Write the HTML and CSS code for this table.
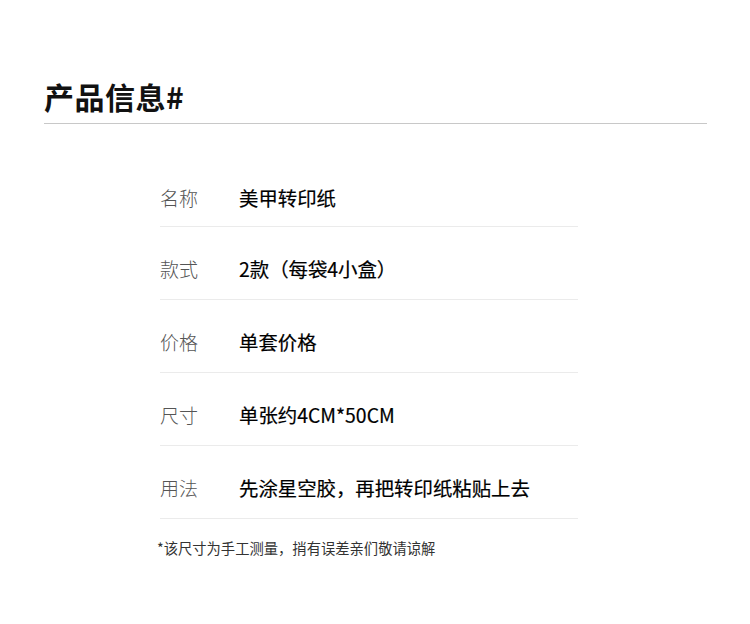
FILE: index.html
```html
<!DOCTYPE html>
<html lang="zh">
<head>
<meta charset="utf-8">
<title>产品信息</title>
<link rel="stylesheet" href="styles.css">
</head>
<body>
<div class="page">
  <header class="head">
    <h1 class="title">产品信息#</h1>
  </header>
  <section class="info">
    <div class="row"><span class="label">名称</span><span class="value">美甲转印纸</span></div>
    <div class="row"><span class="label">款式</span><span class="value">2款（每袋4小盒）</span></div>
    <div class="row"><span class="label">价格</span><span class="value">单套价格</span></div>
    <div class="row"><span class="label">尺寸</span><span class="value">单张约4CM*50CM</span></div>
    <div class="row"><span class="label">用法</span><span class="value">先涂星空胶，再把转印纸粘贴上去</span></div>
    <p class="note">*该尺寸为手工测量，捎有误差亲们敬请谅解</p>
  </section>
</div>
</body>
</html>
```

FILE: styles.css
```css
html, body {
  margin: 0;
  padding: 0;
  background: #ffffff;
}
body {
  font-family: "Noto Sans CJK SC", "Noto Sans", sans-serif;
  color: #111;
}
.page {
  width: 750px;
  height: 624px;
  padding-top: 76px;
  box-sizing: border-box;
}
.head {
  margin: 0 43px 0 44px;
  border-bottom: 1px solid #c8c8c8;
  padding-bottom: 6px;
}
.title {
  margin: 0;
  font-size: 30px;
  line-height: 41px;
  font-weight: 700;
  color: #111;
  letter-spacing: 0.5px;
}
.info {
  margin: 28px 0 0 160px;
  width: 418px;
}
.row {
  display: flex;
  align-items: center;
  height: 73px;
  padding-top: 10px;
  box-sizing: border-box;
  border-bottom: 1px solid #ebebeb;
}
.row:first-child {
  height: 75px;
  padding-top: 17px;
}
.label {
  width: 79px;
  flex: none;
  font-size: 19px;
  font-weight: 300;
  color: #555;
}
.value {
  font-size: 19.4px;
  font-weight: 400;
  color: #000;
  -webkit-text-stroke: 0.2px #000;
}
.note {
  margin: 18px 0 0 -3px;
  font-size: 14.3px;
  line-height: 22px;
  color: #333;
}
```
